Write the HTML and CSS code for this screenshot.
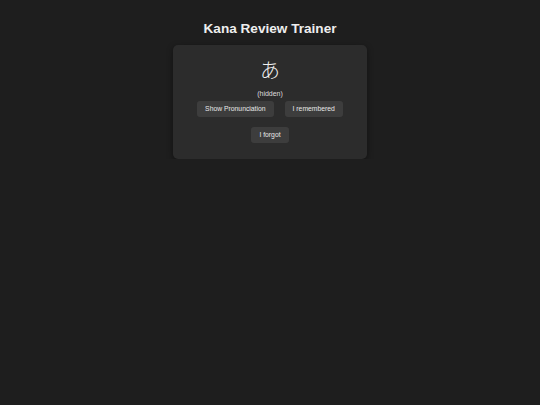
FILE: index.html
```html
<!DOCTYPE html>
<html lang="en">
<head>
<meta charset="utf-8">
<title>Kana Review Trainer</title>
<link rel="stylesheet" href="styles.css">
</head>
<body>
<main class="app">
  <h1 class="title">Kana Review Trainer</h1>
  <section class="card">
    <div class="kana" lang="ja">あ</div>
    <div class="reading">(hidden)</div>
    <div class="actions">
      <button class="btn">Show Pronunciation</button>
      <button class="btn">I remembered</button>
      <button class="btn">I forgot</button>
    </div>
  </section>
</main>
</body>
</html>
```
FILE: styles.css
```css
html, body {
  margin: 0;
  padding: 0;
  background: #1e1e1e;
  color: #e6e6e6;
  font-family: "Liberation Sans", Arial, sans-serif;
}
.app {
  display: flex;
  flex-direction: column;
  align-items: center;
  padding-top: 20px;
}
.title {
  margin: 0;
  font-size: 13.6px;
  line-height: 18px;
  font-weight: bold;
  color: #eeeeee;
}
.card {
  margin-top: 7px;
  width: 154px;
  padding: 11px 20px 16px;
  background: #2c2c2c;
  border-radius: 5px;
  box-shadow: 0 2px 6px rgba(0, 0, 0, 0.45);
  display: flex;
  flex-direction: column;
  align-items: center;
}
.kana {
  font-family: "Noto Sans CJK JP", sans-serif;
  font-weight: 300;
  font-size: 20px;
  line-height: 28px;
  color: #f0f0f0;
}
.reading {
  margin-top: 5px;
  font-size: 7px;
  line-height: 9px;
  color: #dddddd;
}
.actions {
  margin-top: 3px;
  display: flex;
  flex-wrap: wrap;
  justify-content: center;
  gap: 10px 11px;
}
.btn {
  height: 16px;
  padding: 0 8px;
  border: none;
  border-radius: 3px;
  background: #3d3d3d;
  color: #e8e8e8;
  font-family: "Liberation Sans", Arial, sans-serif;
  font-size: 6.8px;
  line-height: 16px;
}
```
